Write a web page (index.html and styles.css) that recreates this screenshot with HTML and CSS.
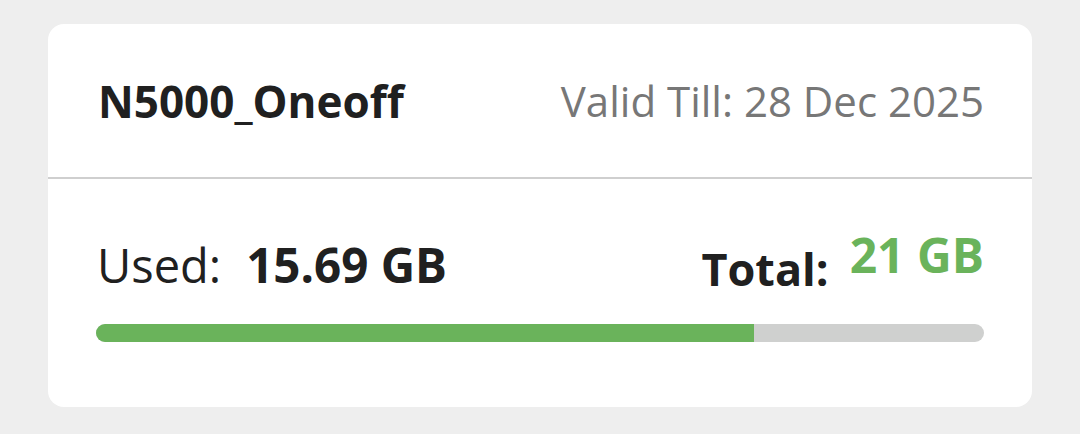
FILE: index.html
```html
<!DOCTYPE html>
<html>
<head>
<meta charset="utf-8">
<link rel="stylesheet" href="styles.css">
</head>
<body>
<div class="card">
  <div class="card-head">
    <div class="plan">N5000_Oneoff</div>
    <div class="valid">Valid Till: 28 Dec 2025</div>
  </div>
  <div class="card-body">
    <div class="stats">
      <div class="used"><span class="label">Used:</span><span class="value">15.69 GB</span></div>
      <div class="total"><span class="total-label">Total:</span><span class="total-value">21 GB</span></div>
    </div>
    <div class="bar"><div class="bar-fill" style="width: 74.1%"></div></div>
  </div>
</div>
</body>
</html>
```
FILE: styles.css
```css
* { box-sizing: border-box; }
body {
  margin: 0;
  background: #eeeeee;
  font-family: "Open Sans", "Noto Sans", sans-serif;
  color: #222222;
}
.card {
  margin: 24px 48px 0 48px;
  width: 984px;
  height: 383px;
  background: #ffffff;
  border-radius: 16px;
  overflow: hidden;
}
.card-head {
  height: 155px;
  display: flex;
  justify-content: space-between;
  align-items: center;
  padding: 0 48px 0 50px;
  border-bottom: 2px solid #cfcfcf;
}
.plan {
  font-size: 44px;
  font-weight: 700;
  color: #202020;
}
.valid {
  font-size: 42px;
  color: #777777;
}
.card-body {
  padding: 54px 48px 0 48px;
}
.stats {
  display: flex;
  justify-content: space-between;
  align-items: flex-end;
  height: 66px;
  padding: 0 0 0 1px;
}
.used {
  display: flex;
  align-items: baseline;
  gap: 25px;
  line-height: 60px;
  padding-bottom: 4px;
}
.label {
  font-size: 47px;
  color: #202020;
}
.value {
  font-size: 47.5px;
  font-weight: 700;
  color: #202020;
}
.total {
  display: flex;
  align-items: flex-end;
  gap: 21px;
}
.total-label {
  font-size: 45px;
  font-weight: 700;
  line-height: 60px;
  color: #202020;
  padding-bottom: 0;
}
.total-value {
  font-size: 48px;
  font-weight: 700;
  line-height: 60px;
  color: #6ab35b;
  padding-bottom: 14px;
}
.bar {
  margin-top: 25px;
  height: 18px;
  border-radius: 9px;
  background: #cfd0cf;
  overflow: hidden;
}
.bar-fill {
  height: 100%;
  background: #6ab35b;
}
```
